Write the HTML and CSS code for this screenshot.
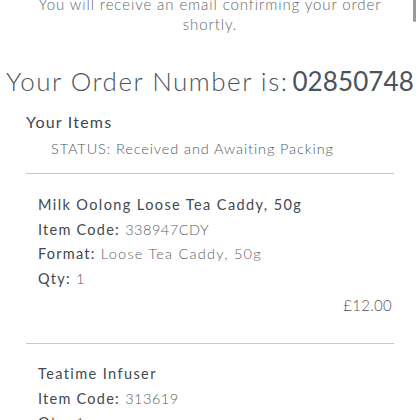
FILE: index.html
```html
<!DOCTYPE html>
<html>
<head>
<meta charset="utf-8">
<link rel="stylesheet" href="styles.css">
</head>
<body>
<div class="scroll-indicator"></div>
<main class="page">
  <p class="intro">You will receive an email confirming your order shortly.</p>
  <h1 class="order-title">Your Order Number is:<span class="order-num">02850748</span></h1>
  <section class="items">
    <h2 class="items-title">Your Items</h2>
    <p class="status"><span class="status-label">STATUS:</span> Received and Awaiting Packing</p>
    <div class="item">
      <div class="item-name">Milk Oolong Loose Tea Caddy, 50g</div>
      <div class="item-row"><span class="lbl">Item Code:</span> <span class="num">338947CDY</span></div>
      <div class="item-row"><span class="lbl">Format:</span> Loose Tea Caddy, 50g</div>
      <div class="item-row"><span class="lbl">Qty:</span> 1</div>
      <div class="item-price">£12.00</div>
    </div>
    <div class="item">
      <div class="item-name">Teatime Infuser</div>
      <div class="item-row"><span class="lbl">Item Code:</span> <span class="num">313619</span></div>
      <div class="item-row"><span class="lbl">Qty:</span> 1</div>
      <div class="item-price">£6.00</div>
    </div>
  </section>
</main>
</body>
</html>
```
FILE: styles.css
```css
html, body {
  margin: 0;
  padding: 0;
  background: #ffffff;
  overflow: hidden;
}
body {
  font-family: "Lato", "Noto Sans", sans-serif;
  color: #4a5058;
}
.scroll-indicator {
  position: absolute;
  top: 0;
  left: 413px;
  width: 3px;
  height: 22px;
  background: #9a9a9a;
  border-radius: 0 0 2px 2px;
}
.page {
  margin-top: -6px;
}
.intro {
  margin: 0 auto;
  width: 380px;
  text-align: center;
  font-size: 15px;
  line-height: 20px;
  font-weight: 300;
  letter-spacing: 0.9px;
  color: #62676d;
}
.order-title {
  margin: 30px 0 0;
  text-align: center;
  font-size: 26px;
  line-height: 34px;
  font-weight: 300;
  letter-spacing: 1.5px;
  color: #4b545d;
  white-space: nowrap;
}
.order-num {
  font-weight: 400;
  margin-left: 4px;
  letter-spacing: 0.1px;
}
.items {
  margin: 13px 26px 0;
}
.items-title {
  margin: 0;
  font-size: 16px;
  line-height: 22px;
  font-weight: 400;
  letter-spacing: 1.2px;
  color: #3f464e;
}
.status {
  margin: 6px 0 0 25px;
  font-size: 14.5px;
  line-height: 20px;
  font-weight: 300;
  letter-spacing: 0.9px;
  color: #53595f;
}
.item {
  border-top: 1px solid #c3cbd2;
  margin-top: 14px;
  padding: 19px 0 25px 12px;
}
.items .item + .item {
  margin-top: 0;
  padding-top: 18px;
}
.item-name, .item-row {
  font-size: 14.5px;
  line-height: 24.7px;
  letter-spacing: 1.25px;
  color: #595e64;
  font-weight: 300;
}
.num {
  letter-spacing: 0.5px;
}
.item-name, .lbl {
  font-weight: 400;
  color: #42484f;
}
.item-name {
  letter-spacing: 1.4px;
}
.item-price {
  text-align: right;
  font-size: 15px;
  line-height: 26px;
  letter-spacing: 0.3px;
  font-weight: 300;
  color: #4e545a;
  padding-right: 2px;
}
```
